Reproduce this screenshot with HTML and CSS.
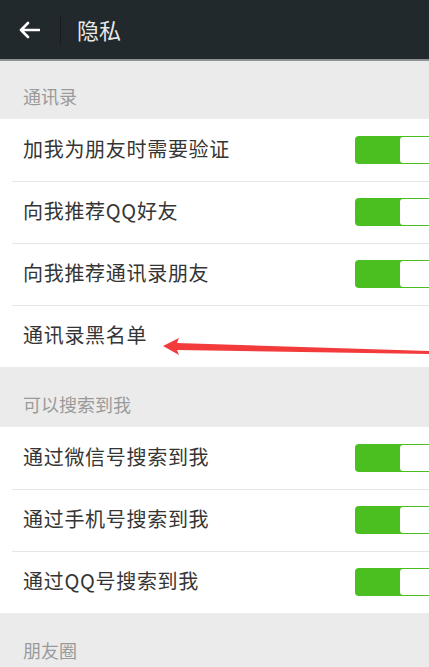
FILE: index.html
```html
<!DOCTYPE html>
<html lang="zh-CN">
<head>
  <meta charset="UTF-8" />
  <meta name="viewport" content="width=device-width, initial-scale=1.0"/>
  <title>隐私</title>
  <link rel="stylesheet" href="styles.css">
</head>
<body>

  <header class="topbar">
    <a href="#" class="back">
      <svg width="22" height="18" viewBox="0 0 22 18">
        <path d="M21 9H3M10 2L3 9l7 7" fill="none" stroke="#fff" stroke-width="2.6" stroke-linecap="round" stroke-linejoin="round"/>
      </svg>
    </a>
    <span class="divider"></span>
    <h1>隐私</h1>
  </header>

  <main>
    <div class="group-title">通讯录</div>
    <ul class="group">
      <li>加我为朋友时需要验证<span class="switch"></span></li>
      <li>向我推荐QQ好友<span class="switch"></span></li>
      <li>向我推荐通讯录朋友<span class="switch"></span></li>
      <li>通讯录黑名单</li>
    </ul>

    <div class="group-title">可以搜索到我</div>
    <ul class="group">
      <li>通过微信号搜索到我<span class="switch"></span></li>
      <li>通过手机号搜索到我<span class="switch"></span></li>
      <li>通过QQ号搜索到我<span class="switch"></span></li>
    </ul>

    <div class="group-title">朋友圈</div>
  </main>

  <!-- annotation arrow -->
  <svg class="mark" width="429" height="667" viewBox="0 0 429 667">
    <polygon points="163,346 179,338 177,343 429,351 429,354 177,350 179,355" fill="#f43b3b"/>
  </svg>

</body>
</html>
```

FILE: styles.css
```css
:root {
  --bar: #22292c;
  --bg: #ebebeb;
  --line: #e6e6e6;
  --text: #353535;
  --muted: #9a9a9a;
  --green: #4bbf1f;
}

* {
  box-sizing: border-box;
  margin: 0;
  padding: 0;
  font-family: "Noto Sans CJK SC", "Noto Sans", sans-serif;
}

body {
  background: var(--bg);
  width: 429px;
  height: 667px;
  overflow: hidden;
  position: relative;
}

.topbar {
  height: 61px;
  background: var(--bar);
  border-bottom: 2px solid #8e9193;
  display: flex;
  align-items: center;
}

.back {
  width: 56px;
  display: flex;
  justify-content: center;
  padding-left: 2px;
}

.divider {
  width: 1px;
  height: 30px;
  background: #171c1e;
  margin-left: 4px;
}

.topbar h1 {
  font-size: 22px;
  font-weight: normal;
  color: #e9e9e9;
  margin-left: 16px;
  margin-top: -2px;
}

.group-title {
  height: 58px;
  padding: 23px 0 0 23px;
  font-size: 18px;
  line-height: 24px;
  color: var(--muted);
}

.group + .group-title {
  height: 60px;
  padding-top: 25px;
}

.group {
  list-style: none;
  background: #fff;
}

.group li {
  height: 62px;
  padding: 0 0 3px 23px;
  display: flex;
  align-items: center;
  justify-content: space-between;
  font-size: 20px;
  letter-spacing: 0.7px;
  color: var(--text);
  position: relative;
}

.group li + li::before {
  content: "";
  position: absolute;
  top: 0;
  left: 12px;
  right: 0;
  height: 1px;
  background: var(--line);
}

.switch {
  width: 80px;
  height: 28px;
  margin-right: -6px;
  border-radius: 4px;
  background: var(--green);
  position: relative;
  margin-top: 2px;
}

.switch::after {
  content: "";
  position: absolute;
  left: 45px;
  top: 1px;
  right: 1px;
  bottom: 1px;
  background: #fff;
  border-radius: 3px;
}

.mark {
  position: absolute;
  top: 0;
  left: 0;
  pointer-events: none;
}
```
